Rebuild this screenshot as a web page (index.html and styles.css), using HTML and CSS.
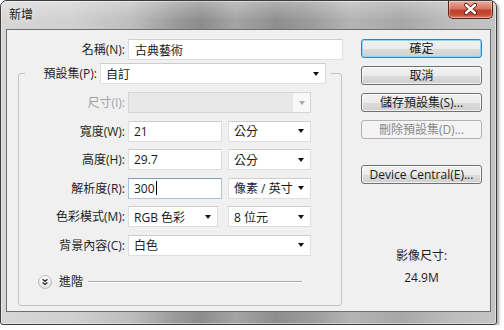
FILE: index.html
```html
<!DOCTYPE html>
<html lang="zh-Hant">
<head>
  <meta charset="UTF-8" />
  <title>新增</title>
  <link rel="stylesheet" href="styles.css">
</head>
<body>

<div class="window">
  <div class="titlebar">
    <span class="title">新增</span>
    <button class="close" aria-label="關閉">
      <svg width="45" height="18" viewBox="0 0 45 18">
        <path d="M18 5 L27 13 M27 5 L18 13" stroke="#5a1c14" stroke-width="4.2" stroke-linecap="round" />
        <path d="M18 5 L27 13 M27 5 L18 13" stroke="#fff" stroke-width="2.4" stroke-linecap="round" />
      </svg>
    </button>
  </div>

  <div class="client">
    <div class="form">
      <div class="row name-row">
        <label class="label name-label">名稱(N):</label>
        <div class="field name-field">古典藝術</div>
      </div>

      <fieldset class="group">
        <legend class="preset">
          <div class="row">
            <label class="label short">預設集(P):</label>
            <div class="combo preset-combo">自訂<i class="arrow"></i></div>
          </div>
        </legend>

        <div class="rows">
          <div class="row">
            <label class="label disabled">尺寸(I):</label>
            <div class="combo size-combo is-disabled"><span class="fill"></span><span class="drop"><i class="arrow"></i></span></div>
          </div>
          <div class="row">
            <label class="label">寬度(W):</label>
            <div class="field num">21</div>
            <div class="combo unit">公分<i class="arrow"></i></div>
          </div>
          <div class="row">
            <label class="label">高度(H):</label>
            <div class="field num">29.7</div>
            <div class="combo unit">公分<i class="arrow"></i></div>
          </div>
          <div class="row">
            <label class="label">解析度(R):</label>
            <div class="field num focused">300<span class="caret"></span></div>
            <div class="combo unit">像素 / 英寸<i class="arrow"></i></div>
          </div>
          <div class="row">
            <label class="label">色彩模式(M):</label>
            <div class="combo mode">RGB 色彩<i class="arrow"></i></div>
            <div class="combo unit depth">8 位元<i class="arrow"></i></div>
          </div>
          <div class="row">
            <label class="label">背景內容(C):</label>
            <div class="combo size-combo">白色<i class="arrow"></i></div>
          </div>
        </div>

        <div class="advanced">
          <svg class="expand" width="14" height="14" viewBox="0 0 14 14">
            <defs>
              <linearGradient id="knob" x1="0" y1="0" x2="0" y2="1">
                <stop offset="0" stop-color="#ffffff" />
                <stop offset="1" stop-color="#e2e2e2" />
              </linearGradient>
            </defs>
            <circle cx="7" cy="7" r="6.4" fill="url(#knob)" stroke="#b4b4b4" />
            <path d="M4.6 4.3 L7 6.3 L9.4 4.3 M4.6 7.4 L7 9.4 L9.4 7.4" fill="none" stroke="#2a2a2a" stroke-width="1.3" />
          </svg>
          <span class="adv-text">進階</span>
          <span class="rule"></span>
        </div>
      </fieldset>
    </div>

    <div class="actions">
      <button class="btn default">確定</button>
      <button class="btn">取消</button>
      <button class="btn">儲存預設集(S)...</button>
      <button class="btn" disabled>刪除預設集(D)...</button>
      <button class="btn device">Device Central(E)...</button>
      <div class="info">
        <div>影像尺寸:</div>
        <div>24.9M</div>
      </div>
    </div>
  </div>
</div>

</body>
</html>
```

FILE: styles.css
```css
* {
  box-sizing: border-box;
}

body {
  margin: 0;
  background: #fff;
  font-family: "Open Sans", "Noto Sans CJK TC", sans-serif;
  font-size: 12px;
  color: #1e1e1e;
}

/* window frame */
.window {
  width: 497px;
  height: 325px;
  border: 1px solid #3c3c3c;
  border-radius: 7px 7px 3px 3px;
  display: flex;
  flex-direction: column;
  background: linear-gradient(90deg, #d6d6d6 0, #d0d0d0 70px, #bdbdbd 130px, #9a9a9a 175px, #8c8c8c 200px, #a4a4a4 235px, #8e8e8e 275px, #9b9b9b 310px, #b4b4b4 350px, #a7a7a7 400px, #bcbcbc 450px, #c4c4c4 495px);
  box-shadow: 2px 2px 3px rgba(0, 0, 0, 0.35), inset 0 0 0 1px rgba(255, 255, 255, 0.45);
}

.titlebar {
  height: 28px;
  display: flex;
  align-items: flex-start;
  padding-left: 8px;
  border-radius: 6px 6px 0 0;
  background: linear-gradient(180deg, rgba(255, 255, 255, 0.3), rgba(255, 255, 255, 0) 70%);
}

.title {
  line-height: 28px;
  color: #1a1a1a;
  text-shadow: 0 0 6px rgba(255, 255, 255, 0.8);
}

.close {
  margin-left: auto;
  margin-right: 3px;
  width: 45px;
  height: 18px;
  padding: 0;
  border: 1px solid #5b2219;
  border-top: none;
  border-radius: 0 0 5px 5px;
  background: linear-gradient(180deg, #e9b0a2 0, #d77262 45%, #c0402c 55%, #c54a33 80%, #e0806a 100%);
  box-shadow: inset 0 0 0 1px rgba(255, 255, 255, 0.35);
}

.close svg {
  display: block;
  margin: -1px 0 0 -1px;
}

.client {
  flex: 1;
  margin: 0 5px 12px 5px;
  border: 1px solid #6e6e6e;
  background: #f0f0f0;
  display: flex;
  padding-top: 9px;
}

/* left form */
.form {
  width: 336px;
}

.row {
  display: flex;
  align-items: center;
  gap: 3px;
}

.label {
  width: 100px;
  flex: none;
  text-align: right;
  line-height: 21px;
}

.name-label {
  width: 118px;
}

.label.short {
  width: 68px;
}

.label.disabled {
  color: #a3a3a3;
}

.field,
.combo {
  height: 21px;
  flex: none;
  display: flex;
  align-items: center;
  padding-left: 5px;
  background: #fff;
  border: 1px solid #dedede;
  border-top-color: #cdcdcd;
  color: #1a1a1a;
}

.name-field {
  width: 215px;
  padding-left: 6px;
}

.field.num {
  width: 94px;
}

.field.focused {
  border-color: #a9c3dc;
  border-top-color: #7c9fc2;
}

.caret {
  display: inline-block;
  width: 1px;
  height: 14px;
  background: #000;
  margin-left: 1px;
}

.combo {
  padding-right: 6px;
}

.arrow {
  margin-left: auto;
  width: 0;
  height: 0;
  border-left: 3.5px solid transparent;
  border-right: 3.5px solid transparent;
  border-top: 4px solid #111;
}

.preset-combo {
  width: 226px;
}

.size-combo {
  width: 183px;
}

.combo.unit {
  width: 83px;
  margin-left: 3px;
}

.combo.mode {
  width: 90px;
}

.combo.depth {
  margin-left: 7px;
}

.combo.is-disabled {
  padding: 0;
  background: #e8e8e8;
  border-color: #d6d6d6;
}

.is-disabled .fill {
  flex: 1;
}

.is-disabled .drop {
  width: 17px;
  height: 100%;
  display: flex;
  align-items: center;
  justify-content: center;
  background: #f8f8f8;
}

.is-disabled .arrow {
  margin: 0;
  border-top-color: #a8a8a8;
}

/* group box */
.group {
  margin: 3px 0 0 11px;
  width: 324px;
  min-width: 0;
  border: 1px solid #c3c3c3;
  border-radius: 3px;
  padding: 8px 6px 16px;
}

.preset {
  padding: 0 4px;
}

.rows {
  display: flex;
  flex-direction: column;
  gap: 7.5px;
}

.advanced {
  display: flex;
  align-items: center;
  margin-top: 19px;
  padding-left: 13px;
  padding-right: 33px;
}

.expand {
  display: block;
  flex: none;
}

.adv-text {
  margin-left: 7px;
  line-height: 14px;
}

.rule {
  flex: 1;
  margin-left: 5px;
  border-top: 1px solid #a8a8a8;
  border-bottom: 1px solid #fff;
}

/* buttons column */
.actions {
  width: 121px;
  margin-left: 18px;
  display: flex;
  flex-direction: column;
  gap: 8px;
}

.btn {
  height: 19px;
  padding: 0;
  font: inherit;
  color: #1a1a1a;
  border: 1px solid #707070;
  border-radius: 3px;
  background: linear-gradient(180deg, #f2f2f2 0, #ebebeb 50%, #dddddd 51%, #cfcfcf 100%);
  box-shadow: inset 0 0 0 1px rgba(255, 255, 255, 0.7);
  line-height: 16px;
}

.btn.default {
  border-color: #3c7fb1;
  box-shadow: inset 0 0 0 1px #8fd6f3;
}

.btn:disabled {
  color: #8a8a8a;
  border-color: #adb2b5;
  background: #f4f4f4;
  box-shadow: none;
}

.btn.device {
  margin-top: 18px;
}

.info {
  margin-top: 53px;
  text-align: center;
  line-height: 22px;
}
```
